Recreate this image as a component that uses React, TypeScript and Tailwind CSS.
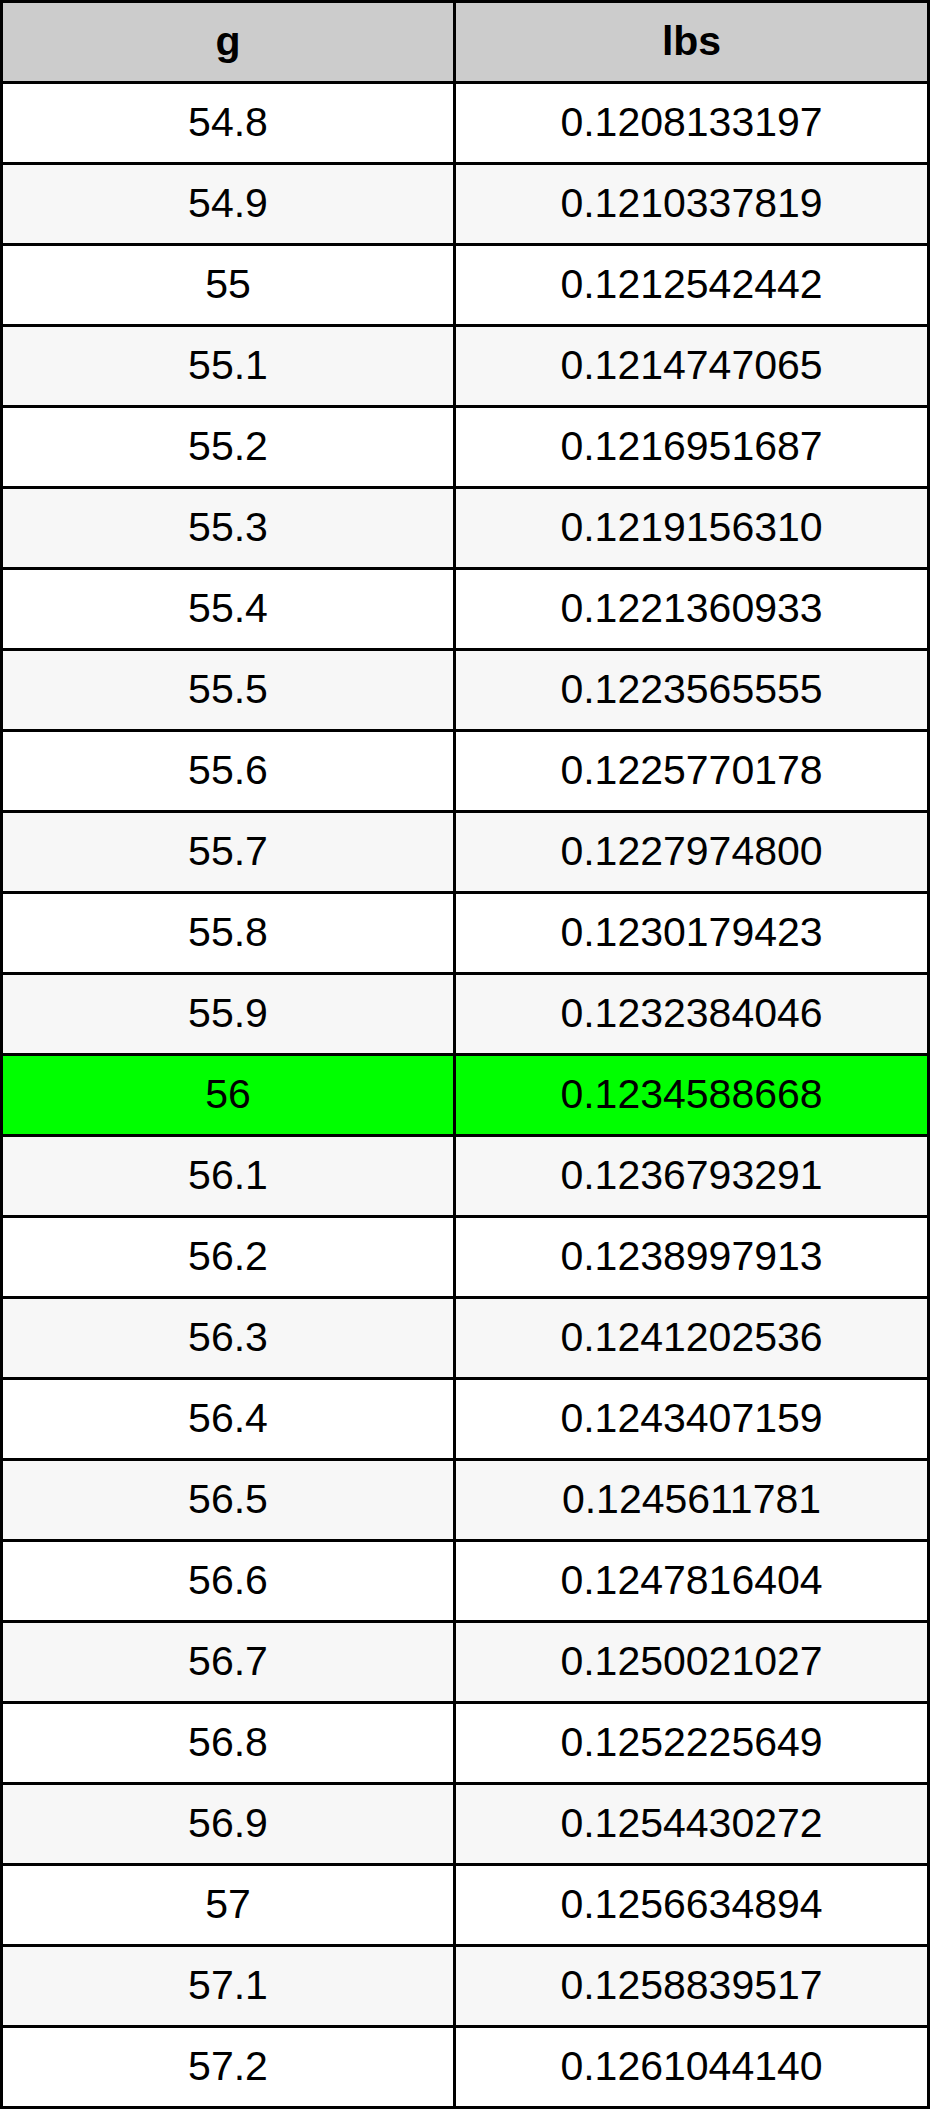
const rows: [string, string][] = [
  ["54.8", "0.1208133197"],
  ["54.9", "0.1210337819"],
  ["55", "0.1212542442"],
  ["55.1", "0.1214747065"],
  ["55.2", "0.1216951687"],
  ["55.3", "0.1219156310"],
  ["55.4", "0.1221360933"],
  ["55.5", "0.1223565555"],
  ["55.6", "0.1225770178"],
  ["55.7", "0.1227974800"],
  ["55.8", "0.1230179423"],
  ["55.9", "0.1232384046"],
  ["56", "0.1234588668"],
  ["56.1", "0.1236793291"],
  ["56.2", "0.1238997913"],
  ["56.3", "0.1241202536"],
  ["56.4", "0.1243407159"],
  ["56.5", "0.1245611781"],
  ["56.6", "0.1247816404"],
  ["56.7", "0.1250021027"],
  ["56.8", "0.1252225649"],
  ["56.9", "0.1254430272"],
  ["57", "0.1256634894"],
  ["57.1", "0.1258839517"],
  ["57.2", "0.1261044140"],
]

function rowBg(g: string, i: number) {
  if (g === "56") return "bg-[#00ff00]"
  return i % 2 === 0 ? "bg-white" : "bg-[#f7f7f7]"
}

export default function App() {
  return (
    <div className="bg-white font-['Liberation_Sans',Arial,sans-serif] text-black">
      <div className="grid w-[930px] grid-cols-[450px_471px] gap-[3px] bg-black p-[3px]">
        <div className="flex h-[78px] items-center justify-center bg-[#cccccc] text-[41px] font-bold">
          g
        </div>
        <div className="flex h-[78px] items-center justify-center bg-[#cccccc] text-[41px] font-bold">
          lbs
        </div>
        {rows.map(([g, lbs], i) => (
          <div key={g} className="contents">
            <div className={`flex h-[78px] items-center justify-center text-[41px] ${rowBg(g, i)}`}>
              {g}
            </div>
            <div className={`flex h-[78px] items-center justify-center text-[41px] ${rowBg(g, i)}`}>
              {lbs}
            </div>
          </div>
        ))}
      </div>
    </div>
  )
}
